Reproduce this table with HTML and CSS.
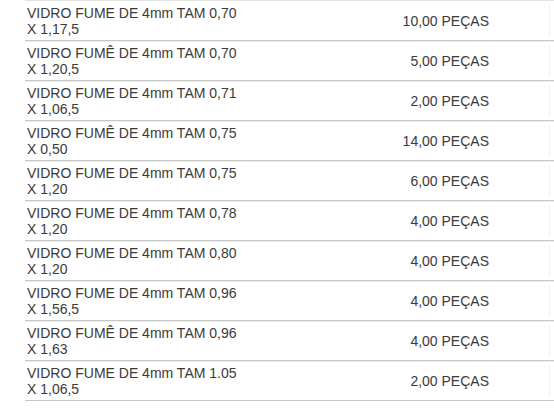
FILE: index.html
```html
<!DOCTYPE html>
<html lang="pt-BR">
<head>
<meta charset="utf-8">
<title>Itens</title>
<link rel="stylesheet" href="styles.css">
</head>
<body>
<div class="list">
  <div class="row"><div class="desc">VIDRO FUME DE 4mm TAM 0,70<br>X 1,17,5</div><div class="qty">10,00 PEÇAS</div><div class="extra"></div></div>
  <div class="row"><div class="desc">VIDRO FUMÊ DE 4mm TAM 0,70<br>X 1,20,5</div><div class="qty">5,00 PEÇAS</div><div class="extra"></div></div>
  <div class="row"><div class="desc">VIDRO FUME DE 4mm TAM 0,71<br>X 1,06,5</div><div class="qty">2,00 PEÇAS</div><div class="extra"></div></div>
  <div class="row"><div class="desc">VIDRO FUMÊ DE 4mm TAM 0,75<br>X 0,50</div><div class="qty">14,00 PEÇAS</div><div class="extra"></div></div>
  <div class="row"><div class="desc">VIDRO FUME DE 4mm TAM 0,75<br>X 1,20</div><div class="qty">6,00 PEÇAS</div><div class="extra"></div></div>
  <div class="row"><div class="desc">VIDRO FUME DE 4mm TAM 0,78<br>X 1,20</div><div class="qty">4,00 PEÇAS</div><div class="extra"></div></div>
  <div class="row"><div class="desc">VIDRO FUME DE 4mm TAM 0,80<br>X 1,20</div><div class="qty">4,00 PEÇAS</div><div class="extra"></div></div>
  <div class="row"><div class="desc">VIDRO FUME DE 4mm TAM 0,96<br>X 1,56,5</div><div class="qty">4,00 PEÇAS</div><div class="extra"></div></div>
  <div class="row"><div class="desc">VIDRO FUMÊ DE 4mm TAM 0,96<br>X 1,63</div><div class="qty">4,00 PEÇAS</div><div class="extra"></div></div>
  <div class="row"><div class="desc">VIDRO FUME DE 4mm TAM 1.05<br>X 1,06,5</div><div class="qty">2,00 PEÇAS</div><div class="extra"></div></div>
</div>
</body>
</html>
```
FILE: styles.css
```css
html, body {
  margin: 0;
  padding: 0;
  background: #ffffff;
}
body {
  font-family: "Liberation Sans", Arial, sans-serif;
  font-size: 14px;
  line-height: 16px;
  color: #3a3a3a;
  overflow: hidden;
}
.list {
  margin-left: 25px;
  border-top: 1px solid #e2e2e2;
}
.row {
  display: grid;
  grid-template-columns: 300px 166px 59px 1fr;
  height: 39px;
  border-bottom: 1px solid #c8c8c8;
  box-shadow: 0 1px 0 #ececec;
  box-sizing: content-box;
}
.desc {
  padding: 4px 0 3px 2px;
}
.qty {
  display: flex;
  align-items: center;
  justify-content: flex-end;
  padding-right: 2px;
}
.extra {
  border-right: 1px solid #f0f0f0;
  margin: 4px 0;
}
```
